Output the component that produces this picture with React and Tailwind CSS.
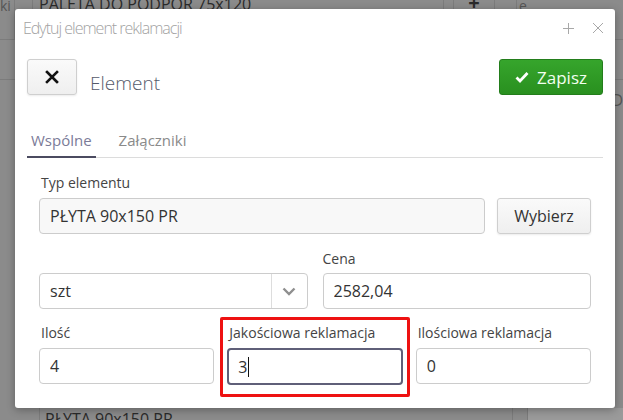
import React from "react"

function Field({ label, value, className = "" }) {
  return (
    <div className={"flex flex-col " + className}>
      <label className="h-[20px] pl-[2px] text-[14px] leading-[20px] text-[#444]">{label}</label>
      <input
        readOnly
        value={value}
        className="mt-[5px] h-[36px] w-full rounded-[4px] border border-[#ccc] bg-white px-[10px] text-[16px] text-[#333] outline-none"
      />
    </div>
  )
}

export default function App() {
  return (
    <div
      className="relative h-[420px] w-[623px] overflow-hidden bg-[#8b8b8b]"
      style={{ fontFamily: '"Open Sans", "Liberation Sans", sans-serif' }}
    >
      {/* dimmed page behind the dialog */}
      <div className="absolute inset-0 text-[#2a2a2a]">
        <div className="flex h-[40px] border-b border-[#7c7c7c]">
          <div className="w-[15px] border-r border-[#7c7c7c] text-[14px] leading-[12px] text-[#555]">ki</div>
          <div className="w-[18px] border-r border-[#7c7c7c]" />
          <div className="flex-1 pl-[6px] text-[16px] leading-[8px]">PALETA DO PODPÓR 75x120</div>
          <div className="w-[11px] border-x border-[#7c7c7c]" />
          <div className="flex w-[41px] justify-center border-r border-[#7c7c7c] text-[20px] font-bold leading-[6px]">+</div>
          <div className="w-[22px] border-r border-[#7c7c7c]" />
          <div className="w-[106px] pl-[2px] text-[14px] leading-[12px] text-[#555]">e</div>
        </div>
        <div className="h-[40px] border-b border-[#7c7c7c]" />
        <div className="absolute bottom-0 left-0 flex h-[12px] w-full">
          <div className="w-[40px] border-r border-[#7c7c7c]" />
          <div className="flex-1 pl-[5px] text-[16px] leading-[22px]">PŁYTA 90x150 PR</div>
          <div className="w-[16px] border-x border-[#7c7c7c]" />
          <div className="w-[95px] bg-[#9a9a9a]" />
        </div>
        <div className="absolute right-0 top-[88px] text-[16px] text-[#555]">D</div>
      </div>

      {/* dialog */}
      <div className="absolute left-[15px] top-[9px] h-[399px] w-[600px] rounded-[3px] bg-white shadow-[0_2px_8px_rgba(0,0,0,0.3)]">
        <div className="flex h-[38px] items-center pl-[8px] pr-[12px]">
          <div className="flex-1 text-[16px] font-light tracking-[-1px] text-[#a2a2a2]">Edytuj element reklamacji</div>
          <svg width="11" height="11" viewBox="0 0 11 11" className="mr-[19px]">
            <path d="M5.5 0v11M0 5.5h11" stroke="#a8a8a8" strokeWidth="1" />
          </svg>
          <svg width="10" height="10" viewBox="0 0 10 10">
            <path d="M0 0l10 10M10 0L0 10" stroke="#a8a8a8" strokeWidth="1" />
          </svg>
        </div>

        <div className="px-[12px]">
          <div className="mt-[10px] flex items-center">
            <button className="flex h-[36px] w-[50px] items-center justify-center rounded-[3px] border border-[#cfcfcf] bg-gradient-to-b from-[#fafafa] to-[#efefef] shadow-[0_1px_2px_rgba(0,0,0,0.08)]">
              <svg width="14" height="14" viewBox="0 0 14 14">
                <path d="M2 2l10 10M12 2L2 12" stroke="#111" strokeWidth="2.6" strokeLinecap="square" />
              </svg>
            </button>
            <div className="ml-[13px] mt-[12px] text-[19px] font-light text-[#555a6a]">Element</div>
            <button className="ml-auto flex h-[36px] w-[104px] items-center justify-center gap-[8px] rounded-[3px] border border-[#237d1b] bg-gradient-to-b from-[#36a52c] to-[#29901f] text-[17px] text-[#f2fff0]">
              <svg width="14" height="12" viewBox="0 0 14 12">
                <path d="M1.5 6.5l3.5 3.5L12.5 2" fill="none" stroke="#fff" strokeWidth="2.8" />
              </svg>
              Zapisz
            </button>
          </div>

          <div className="mt-[31px] flex border-b border-[#dcdcdc]">
            <div className="-mb-[1px] border-b-2 border-[#4b4b60] px-[4px] pb-[5px] text-[15px] text-[#7b7b98]">Wspólne</div>
            <div className="ml-[19px] px-[4px] pb-[5px] text-[15px] text-[#8a8a8a]">Załączniki</div>
          </div>

          <div className="px-[12px] pt-[15px]">
            <label className="block h-[20px] pl-[2px] text-[14px] leading-[20px] text-[#444]">Typ elementu</label>
            <div className="mt-[5px] flex gap-[12px]">
              <input
                readOnly
                value="PŁYTA 90x150 PR"
                className="h-[36px] flex-1 rounded-[4px] border border-[#ccc] bg-[#f8f8f8] px-[10px] text-[16px] text-[#333] outline-none"
              />
              <button className="h-[36px] w-[94px] rounded-[3px] border border-[#cfcfcf] bg-gradient-to-b from-[#fafafa] to-[#efefef] text-[16px] text-[#333] shadow-[0_1px_2px_rgba(0,0,0,0.08)]">
                Wybierz
              </button>
            </div>

            <div className="mt-[15px] grid grid-cols-2 gap-[15px]">
              <div className="flex flex-col">
                <div className="h-[20px]" />
                <div className="mt-[4px] flex h-[36px] rounded-[4px] border border-[#ccc] bg-white">
                  <div className="flex-1 px-[10px] text-[16px] leading-[34px] text-[#333]">szt</div>
                  <div className="flex w-[36px] items-center justify-center border-l border-[#ddd]">
                    <svg width="14" height="9" viewBox="0 0 14 9">
                      <path d="M1.5 1.5l5.5 5.5 5.5-5.5" fill="none" stroke="#8f8f8f" strokeWidth="2.4" />
                    </svg>
                  </div>
                </div>
              </div>
              <div className="flex flex-col">
                <label className="h-[20px] text-[14px] leading-[20px] text-[#444]">Cena</label>
                <input
                  readOnly
                  value="2582,04"
                  className="mt-[4px] h-[36px] w-full rounded-[4px] border border-[#ccc] bg-white px-[10px] text-[16px] text-[#333] outline-none"
                />
              </div>
            </div>

            <div className="mt-[14px] grid grid-cols-3 gap-[13px]">
              <Field label="Ilość" value="4" />
              <div className="relative flex flex-col">
                <label className="h-[20px] pl-[2px] text-[14px] leading-[20px] text-[#444]">Jakościowa reklamacja</label>
                <div className="mt-[5px] flex h-[37px] items-center rounded-[4px] border-2 border-[#5f5f78] bg-white px-[9px] text-[16px] text-[#333]">
                  3<span className="ml-[1px] h-[20px] w-[1px] bg-[#111]" />
                </div>
                <div className="pointer-events-none absolute -left-[7px] -right-[7px] -top-[6px] -bottom-[12px] rounded-[2px] border-[3px] border-[#ee1111]" />
              </div>
              <Field label="Ilościowa reklamacja" value="0" />
            </div>
          </div>
        </div>
      </div>
    </div>
  )
}
